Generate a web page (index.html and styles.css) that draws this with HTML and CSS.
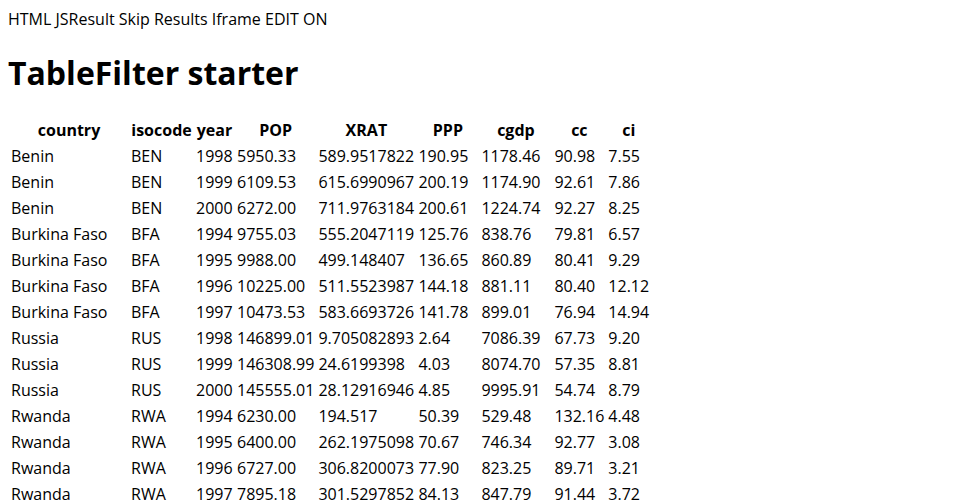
FILE: index.html
```html
<!DOCTYPE html>
<html>
<head>
<meta charset="utf-8">
<link rel="stylesheet" href="styles.css">
</head>
<body>
<div class="nav">HTML JSResult Skip Results Iframe EDIT ON</div>
<h1 class="title">TableFilter starter</h1>
<table class="data">
<thead>
<tr><th class="c-country">country</th><th class="c-iso">isocode</th><th class="c-year">year</th><th class="c-pop">POP</th><th class="c-xrat">XRAT</th><th class="c-ppp">PPP</th><th class="c-cgdp">cgdp</th><th class="c-cc">cc</th><th class="c-ci">ci</th></tr>
</thead>
<tbody>
<tr><td>Benin</td><td>BEN</td><td>1998</td><td>5950.33</td><td>589.9517822</td><td>190.95</td><td>1178.46</td><td>90.98</td><td>7.55</td></tr>
<tr><td>Benin</td><td>BEN</td><td>1999</td><td>6109.53</td><td>615.6990967</td><td>200.19</td><td>1174.90</td><td>92.61</td><td>7.86</td></tr>
<tr><td>Benin</td><td>BEN</td><td>2000</td><td>6272.00</td><td>711.9763184</td><td>200.61</td><td>1224.74</td><td>92.27</td><td>8.25</td></tr>
<tr><td>Burkina Faso</td><td>BFA</td><td>1994</td><td>9755.03</td><td>555.2047119</td><td>125.76</td><td>838.76</td><td>79.81</td><td>6.57</td></tr>
<tr><td>Burkina Faso</td><td>BFA</td><td>1995</td><td>9988.00</td><td>499.148407</td><td>136.65</td><td>860.89</td><td>80.41</td><td>9.29</td></tr>
<tr><td>Burkina Faso</td><td>BFA</td><td>1996</td><td>10225.00</td><td>511.5523987</td><td>144.18</td><td>881.11</td><td>80.40</td><td>12.12</td></tr>
<tr><td>Burkina Faso</td><td>BFA</td><td>1997</td><td>10473.53</td><td>583.6693726</td><td>141.78</td><td>899.01</td><td>76.94</td><td>14.94</td></tr>
<tr><td>Russia</td><td>RUS</td><td>1998</td><td>146899.01</td><td>9.705082893</td><td>2.64</td><td>7086.39</td><td>67.73</td><td>9.20</td></tr>
<tr><td>Russia</td><td>RUS</td><td>1999</td><td>146308.99</td><td>24.6199398</td><td>4.03</td><td>8074.70</td><td>57.35</td><td>8.81</td></tr>
<tr><td>Russia</td><td>RUS</td><td>2000</td><td>145555.01</td><td>28.12916946</td><td>4.85</td><td>9995.91</td><td>54.74</td><td>8.79</td></tr>
<tr><td>Rwanda</td><td>RWA</td><td>1994</td><td>6230.00</td><td>194.517</td><td>50.39</td><td>529.48</td><td>132.16</td><td>4.48</td></tr>
<tr><td>Rwanda</td><td>RWA</td><td>1995</td><td>6400.00</td><td>262.1975098</td><td>70.67</td><td>746.34</td><td>92.77</td><td>3.08</td></tr>
<tr><td>Rwanda</td><td>RWA</td><td>1996</td><td>6727.00</td><td>306.8200073</td><td>77.90</td><td>823.25</td><td>89.71</td><td>3.21</td></tr>
<tr><td>Rwanda</td><td>RWA</td><td>1997</td><td>7895.18</td><td>301.5297852</td><td>84.13</td><td>847.79</td><td>91.44</td><td>3.72</td></tr>
</tbody>
</table>
</body>
</html>
```

FILE: styles.css
```css
body {
  margin: 8px;
  font-family: "Open Sans", sans-serif;
  font-size: 16px;
  color: #000;
  background: #fff;
}
.nav {
  font-size: 16px;
}
.title {
  font-size: 32px;
  font-weight: 700;
  margin: 21.44px 0;
}
.data {
  border-spacing: 2px;
}
.data th,
.data td {
  padding: 1px;
  white-space: nowrap;
}
.data th {
  font-weight: 700;
  text-align: center;
}
.data td {
  text-align: left;
}
.c-country { width: 116px; }
.c-iso { width: 61px; }
.c-year { width: 37px; }
.c-pop { width: 76px; }
.c-xrat { width: 96px; }
.c-ppp { width: 59px; }
.c-cgdp { width: 69px; }
.c-cc { width: 49px; }
.c-ci { width: 41px; }
```
